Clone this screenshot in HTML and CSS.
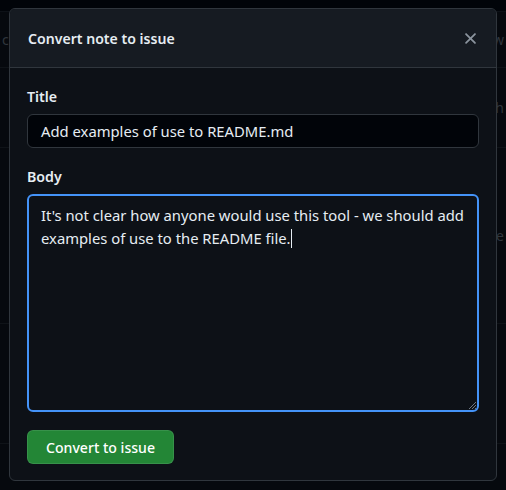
FILE: index.html
```html
<!DOCTYPE html>
<html>
<head>
<meta charset="utf-8">
<link rel="stylesheet" href="styles.css">
</head>
<body>
<div class="page">
  <div class="topbar"></div>
  <div class="row r1"><span class="frag-l">c</span><span class="frag-r">w</span></div>
  <div class="row r2"><span class="frag-r">gh</span></div>
  <div class="row r3"><span class="frag-r">e</span></div>
  <div class="row r4"></div>
</div>
<div class="overlay">
  <div class="dialog">
    <div class="dialog-header">
      <h2 class="dialog-title">Convert note to issue</h2>
      <button class="close" aria-label="Close">
        <svg width="19" height="19" viewBox="0 0 16 16"><path d="M3.72 3.72a.75.75 0 0 1 1.06 0L8 6.94l3.22-3.22a.75.75 0 1 1 1.06 1.06L9.06 8l3.22 3.22a.75.75 0 1 1-1.06 1.06L8 9.06l-3.22 3.22a.75.75 0 0 1-1.06-1.06L6.94 8 3.72 4.78a.75.75 0 0 1 0-1.06Z" fill="#8b949e"/></svg>
      </button>
    </div>
    <div class="dialog-body">
      <label class="label">Title</label>
      <div class="input">Add examples of use to README.md</div>
      <label class="label body-label">Body</label>
      <div class="textarea">It's not clear how anyone would use this tool - we should add examples of use to the README file.<span class="caret"></span>
        <svg class="grip" width="10" height="10" viewBox="0 0 10 10"><path d="M9 2 L2 9 M9 5 L5 9 M9 8 L8 9" stroke="#6e7681" stroke-width="1"/></svg>
      </div>
      <div class="actions"><button class="btn-primary">Convert to issue</button></div>
    </div>
  </div>
</div>
</body>
</html>
```
FILE: styles.css
```css
* { box-sizing: border-box; }
html, body { margin: 0; padding: 0; }
body {
  width: 506px; height: 490px; overflow: hidden;
  background: #06090e;
  font-family: "Noto Sans", "Segoe UI", sans-serif;
  color: #e6edf3;
  position: relative;
}
.page { display: flex; flex-direction: column; }
.topbar { height: 12px; background: #010409; border-bottom: 1px solid #0d1117; }
.row { border-bottom: 1px solid #0f1318; display: flex; justify-content: space-between; align-items: center; padding: 0 2px; color: #30363d; font-size: 14px; }
.r1 { height: 56px; }
.r2 { height: 80px; }
.r3 { height: 176px; }
.r4 { height: 120px; }
.frag-r { margin-left: auto; }
.overlay { position: absolute; inset: 0; padding: 8px 9px; }
.dialog {
  width: 488px; height: 473px;
  background: #0d1117;
  border: 1px solid #30363d;
  border-radius: 6px;
  overflow: hidden;
  display: flex; flex-direction: column;
}
.dialog-header {
  height: 59px;
  background: #161b22;
  border-bottom: 1px solid #30363d;
  display: flex; align-items: center; justify-content: space-between;
  padding: 0 16px 0 18px;
}
.dialog-title { margin: 0; font-size: 14.1px; font-weight: 600; color: #e6edf3; }
.close { background: none; border: 0; padding: 0; width: 19px; height: 19px; display: flex; margin-top: 1px; }
.dialog-body { padding: 18px 17px 0 17px; display: flex; flex-direction: column; }
.label { font-size: 14.2px; font-weight: 600; line-height: 22px; margin-bottom: 6px; }
.body-label { margin-top: 18px; }
.input {
  height: 34px; background: #010409; border: 1px solid #30363d; border-radius: 6px;
  padding: 0 13px; font-size: 14.8px; line-height: 32px; color: #e6edf3;
}
.textarea {
  position: relative;
  height: 218px; background: #0d1117; border: 2px solid #4493f8; border-radius: 6px;
  padding: 8px 12px; font-size: 14.8px; line-height: 23px; color: #e6edf3;
}
.caret { display: inline-block; width: 1px; height: 19px; background: #e6edf3; vertical-align: -4px; }
.grip { position: absolute; right: 0; bottom: 0; }
.actions { margin-top: 18px; display: flex; }
.btn-primary {
  height: 34px; padding: 0 18px; background: #238636; color: #ffffff;
  border: 1px solid rgba(240,246,252,0.1); border-radius: 6px;
  font-family: "Noto Sans", sans-serif; font-size: 14.1px; font-weight: 500;
}
```
